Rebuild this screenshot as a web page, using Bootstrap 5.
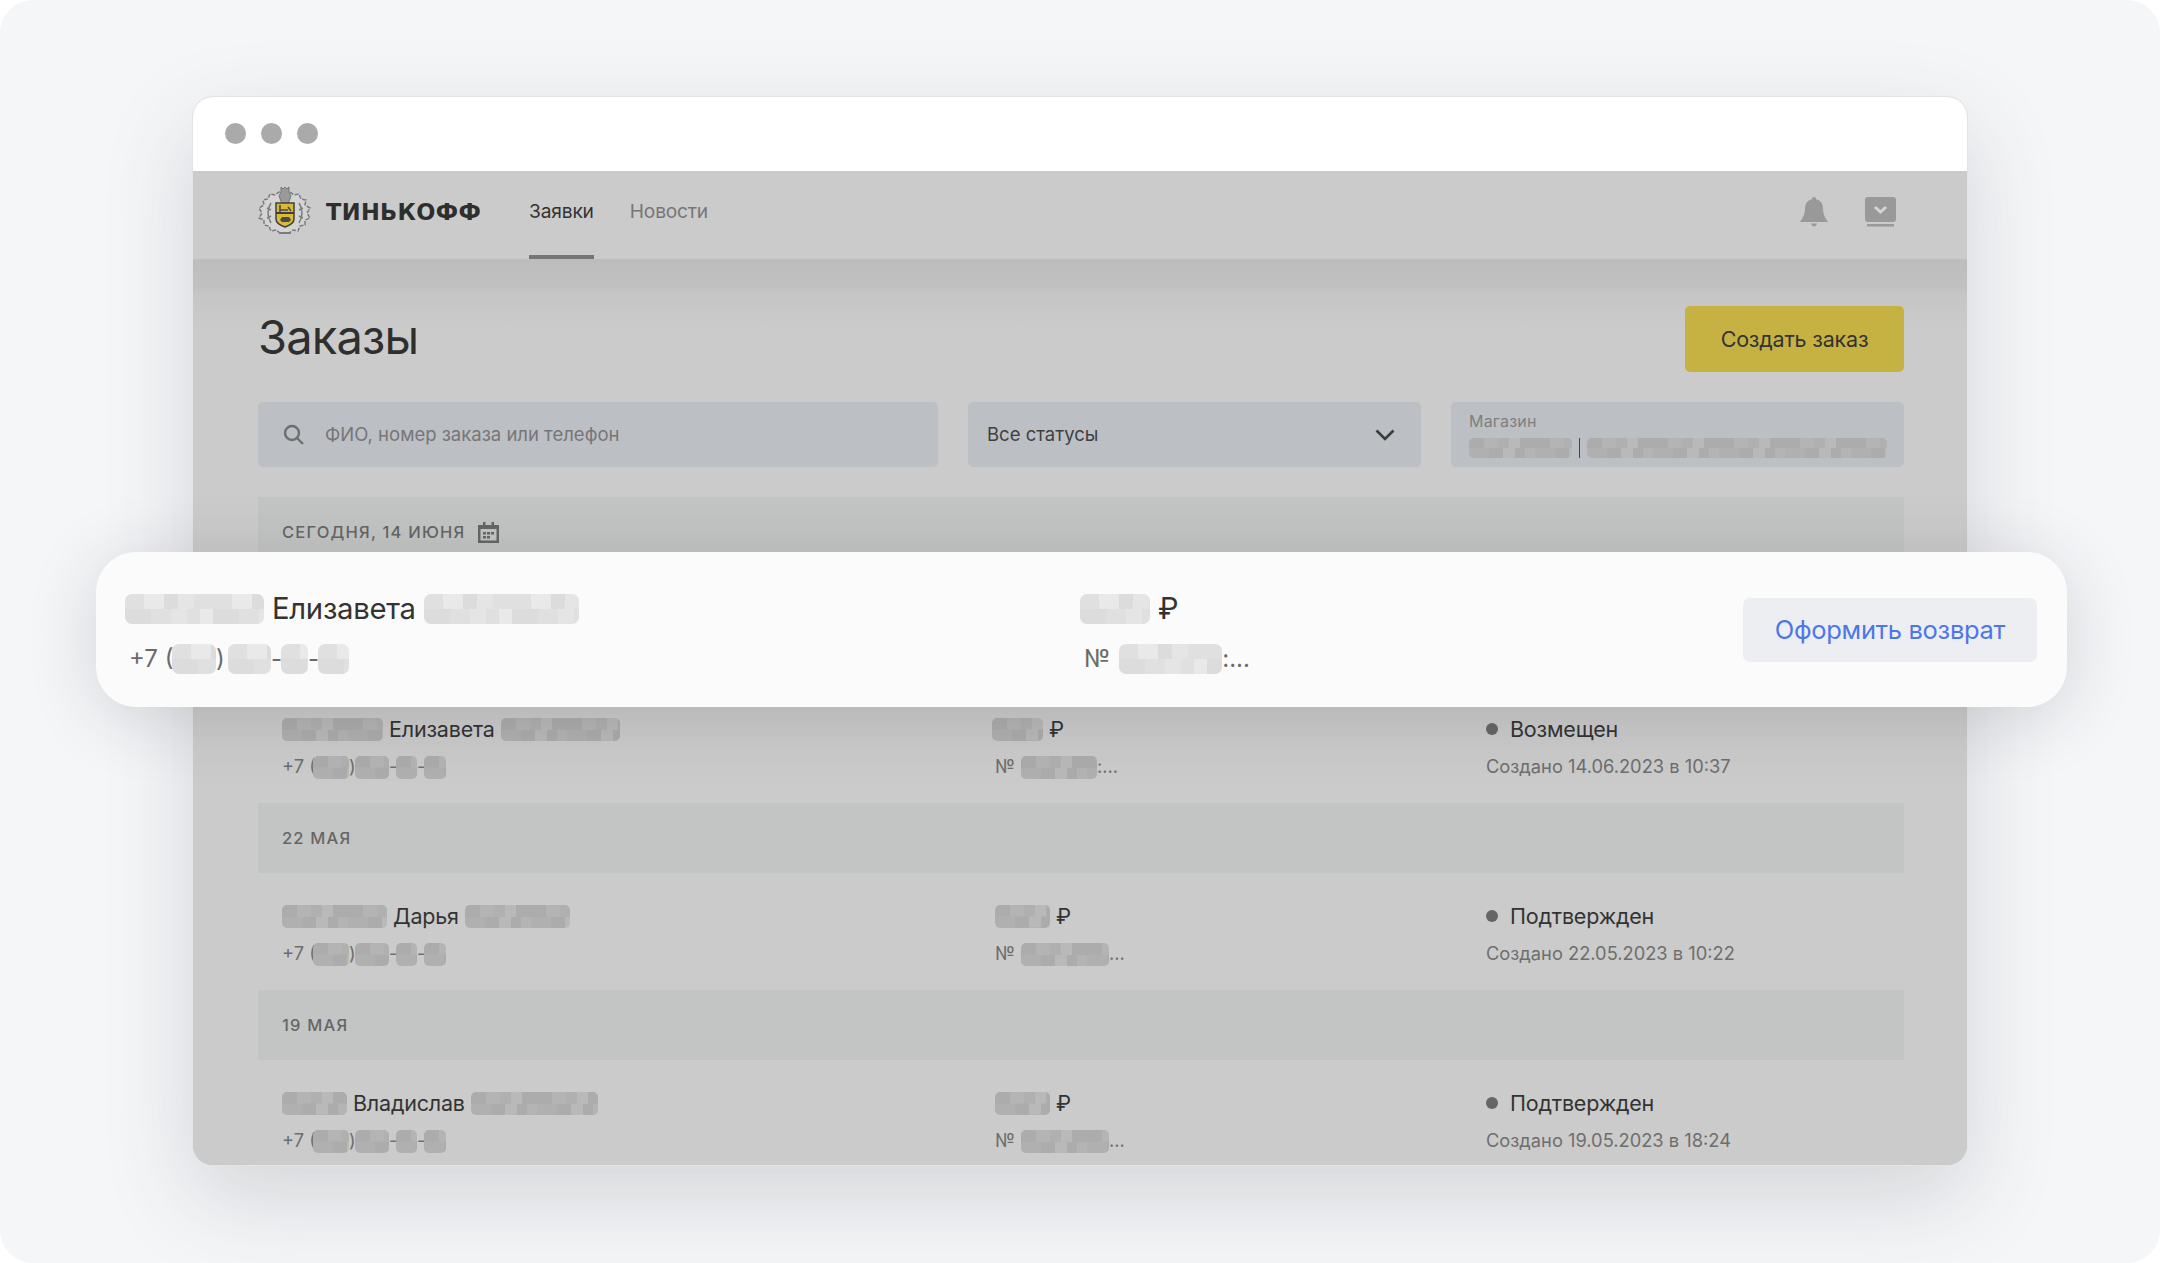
<!DOCTYPE html>
<html lang="ru">
<head>
<meta charset="utf-8">
<title>Заказы</title>
<link href="https://cdn.jsdelivr.net/npm/bootstrap@5.3.0/dist/css/bootstrap.min.css" rel="stylesheet">
<style>
html,body{margin:0;height:100%;background:#fff;overflow:hidden}
body{font-family:Inter,"Noto Sans",sans-serif;color:#333}
.stage{position:relative;width:2160px;height:1263px;background:#f5f6f8;border-radius:33px;padding:97px 193px 98px}
.win{width:1774px;height:1068px;border-radius:20px;overflow:hidden;background:#cbcbcb;box-shadow:0 0 0 1px #e2e3e5,0 32px 90px rgba(60,60,70,.18);display:flex;flex-direction:column}
.titlebar{height:74px;background:#fff;padding:0 0 2px 32px;gap:15px;flex:none}
.tl{width:21px;height:21px;border-radius:50%;background:#aaa}
.topnav{height:88px;flex:none;padding:0 71px 0 65px;background:#cbcbcb}
.logo-word{font-family:"DejaVu Sans",sans-serif;font-weight:700;font-size:22.5px;letter-spacing:.35px;color:#2e2e2e;margin-left:14px;line-height:1;margin-bottom:6px}
.tab{font-size:19.2px;height:88px;line-height:80px;color:#767676;margin-right:36px;border-bottom:4px solid transparent;letter-spacing:-.2px}
.tab.on{color:#333;border-bottom-color:#757575}
.tabs{margin-left:48px}
.iconset{gap:37px;margin-bottom:6px}
.content{flex:1;padding:0 63px 0 65px;background:linear-gradient(#bdbdbd 0,#c1c1c1 30px,#c4c5c4 34px,#cbcbcb 72px)}
.head-line{height:143px;padding-top:47px;align-items:flex-start}
.pagetitle{font-size:47px;line-height:62px;font-weight:400;color:#2f2f2f;margin:0;letter-spacing:-.8px}
.create{width:219px;height:66px;background:#c6b243;border:0;border-radius:5px;font-size:21.5px;color:#333;letter-spacing:-.2px;padding:0}
.filters{gap:30px;height:95px}
.fld{height:65px;background:#bcbfc4;border-radius:5px;font-size:18.5px}
.f-search{width:680px;padding-left:25px;color:#767676;gap:21px}
.f-select{width:453px;padding:0 26px 0 19px;color:#3f3f3f}
.f-store{width:453px;padding:10px 17px 0 18px}
.f-label{font-size:16px;line-height:19px;color:#7f7f7f;letter-spacing:.2px}
.store-line{margin-top:7px}
.bar-sep{width:2px;height:20px;background:#444;margin:0 7px}
.dbar{height:70px;background:#c3c5c4;padding-left:24px;font-size:16.5px;font-weight:500;letter-spacing:1.2px;color:#666;gap:13px}
.order{height:117px;padding:28px 0 0 24px;display:grid;grid-template-columns:713px 491px 1fr;grid-template-rows:30px 30px;row-gap:8px;align-items:center}
.order-gap{height:119px}
.nm{font-size:21.5px;color:#333;letter-spacing:-.2px;gap:6px}
.sub{font-size:18.3px;color:#6e6e6e}
.no-sign{margin-right:6px}
.plus{width:31px;white-space:nowrap;flex:none}
.dash{width:7px;text-align:center;flex:none}
.paren{width:6px;flex:none}
.st{font-size:21.5px;color:#333;gap:12px;letter-spacing:-.2px}
.dot{width:12px;height:12px;border-radius:50%;background:#666;flex:none}
.blk{--a:#acacac;--b:#b4b4b4;--c:#b0b0b0;--d:#b9b9b9;height:23px;border-radius:5px;flex:none;display:block;
background-color:var(--c);
background-image:linear-gradient(90deg,var(--a) 0 22%,var(--b) 22% 44%,var(--c) 44% 60%,var(--d) 60% 78%,var(--a) 78%),linear-gradient(90deg,var(--c) 0 30%,var(--a) 30% 52%,var(--d) 52% 70%,var(--a) 70% 85%,var(--b) 85%);
background-size:66px 50%;background-position:0 0,0 100%;background-repeat:repeat-x}
.f-store .blk{height:20px}
.pop{position:absolute;left:96px;top:552px;width:1971px;height:155px;border-radius:40px;background:#fbfbfb;box-shadow:0 10px 70px rgba(40,40,50,.16);padding:42px 30px 0 29px;display:grid;grid-template-columns:955px 663px 1fr;grid-template-rows:30px 30px;row-gap:20px;align-items:center}
.pop .blk{--a:#e0e0e0;--b:#e9e9e9;--c:#dcdcdc;--d:#e5e5e5;height:30px;border-radius:7px;background-size:88px 50%}
.pop .nm{font-size:29.3px;gap:8px;letter-spacing:-.3px}
.pop .sub{font-size:24px;padding-left:4px;color:#6a6a6a}
.pop .no-sign{margin-right:9px}
.pop .plus{width:43px}
.pop .paren{width:12px}
.pop .dash{width:10px}
.refund{grid-column:3;grid-row:1/3;justify-self:end;align-self:center;width:294px;height:64px;margin-bottom:8px;background:#eceef1;border:0;border-radius:7px;color:#4c76ea;font-size:25.5px;padding:0;letter-spacing:-.3px}
.w139{width:139px}.w155{width:155px}.w44{width:44px}.w43{width:43px}.w27{width:27px}.w31{width:31px}.w70{width:70px}.w103{width:103px}.w101{width:101px}.w119{width:119px}.w36{width:36px}.w34{width:34px}.w21{width:21px}.w22{width:22px}.w105{width:105px}.w65{width:65px}.w127{width:127px}.w55{width:55px}.w88{width:88px}.w76{width:76px}.w51{width:51px}.w300{width:300px}
.amt-first{margin-left:-3px}
</style>
</head>
<body>
<div class="stage">
  <div class="win">
    <div class="titlebar d-flex align-items-center"><span class="tl"></span><span class="tl"></span><span class="tl"></span></div>
    <div class="topnav d-flex align-items-center">
      <svg width="54" height="50" viewBox="0 0 54 50" fill="none" aria-hidden="true" class="mb-2">
        <path d="M27 8l5-2 4 3 5-1 2 5 5 1-1 5 5 3-3 5 3 5-5 2 0 5-5 1-2 5-5-1-4 3H22l-4-3-5 1-2-5-5-1 0-5-5-2 3-5-3-5 5-3-1-5 5-1 2-5 5 1 4-3z" fill="#d4d4d4" stroke="#7c7c7c" stroke-width="1.500" stroke-dasharray="4 1.500"/>
        <path d="M13 17c-4 6-4 14 0 20M41 17c4 6 4 14 0 20M9 22l4 2M9 32l4-2M45 22l-4 2M45 32l-4-2" stroke="#7c7c7c" stroke-width="1.500"/>
        <path d="M23 1l2 2 2-2 2 2 2-2v5l2 4-3 8h-6l-3-8 2-4z" fill="#9a9a9a" stroke="#666" stroke-width=".8"/>
        <path d="M18 17h18v16q0 5-9 8-9-3-9-8z" fill="#d8ba38" stroke="#3f3f3f" stroke-width="1.500"/>
        <path d="M18 27h18" stroke="#3f3f3f" stroke-width="1.800"/>
        <path d="M22 19v7M22 24h8M30 21l3 4" stroke="#4a4a4a" stroke-width="1.600"/>
        <path d="M22 34l2-3h7l2 3-2 2h-7z" fill="#4a4a4a"/>
        <path d="M21 47h12" stroke="#7c7c7c" stroke-width="2"/>
      </svg>
      <span class="logo-word">ТИНЬКОФФ</span>
      <nav class="tabs d-flex">
        <span class="tab on">Заявки</span>
        <span class="tab">Новости</span>
      </nav>
      <div class="iconset ms-auto d-flex align-items-center">
        <svg width="28" height="30" viewBox="0 0 28 30" aria-hidden="true" fill="#999"><path d="M14 0c1.300 0 2 .8 2 2.200 4.800 1 7 4.800 7 9.300 0 5.300 1.500 8.500 5 13.500H0c3.500-5 5-8.200 5-13.500 0-4.500 2.200-8.300 7-9.300C12 .8 12.700 0 14 0z"/><path d="M11 26.500h6c-.5 2-1.500 3-3 3s-2.500-1-3-3z"/></svg>
        <svg width="31" height="30" viewBox="0 0 31 30" aria-hidden="true"><rect x="0" y="0" width="31" height="25" rx="3" fill="#999"/><rect x="2" y="27" width="27" height="2.500" fill="#999"/><path d="M10 10l5.500 5 5.500-5" fill="none" stroke="#d4d4d4" stroke-width="3"/></svg>
      </div>
    </div>
    <div class="content">
      <div class="head-line d-flex justify-content-between">
        <h1 class="pagetitle">Заказы</h1>
        <button class="create" type="button">Создать заказ</button>
      </div>
      <div class="filters d-flex">
        <div class="fld f-search d-flex align-items-center">
          <svg width="21" height="21" viewBox="0 0 21 21" fill="none" stroke="#6f6f6f" stroke-width="2.400" aria-hidden="true"><circle cx="9" cy="9" r="7"/><path d="M14 14l6 6"/></svg>
          <span>ФИО, номер заказа или телефон</span>
        </div>
        <div class="fld f-select d-flex align-items-center justify-content-between">
          <span>Все статусы</span>
          <svg width="20" height="12" viewBox="0 0 20 12" fill="none" stroke="#3c3c3c" stroke-width="2.600" aria-hidden="true"><path d="M1.500 1.500l8.500 8.500 8.500-8.500"/></svg>
        </div>
        <div class="fld f-store">
          <div class="f-label">Магазин</div>
          <div class="store-line d-flex align-items-center"><span class="blk w103"></span><span class="bar-sep"></span><span class="blk w300"></span></div>
        </div>
      </div>
      <div class="dbar d-flex align-items-center">
        <span>СЕГОДНЯ, 14 ИЮНЯ</span>
        <svg width="21" height="21" viewBox="0 0 21 21" aria-hidden="true"><path d="M5 0h2.500v3h6V0H16v3h5v18H0V3h5z" fill="#666"/><rect x="2.500" y="7" width="16" height="11.500" fill="#c3c5c4"/><path d="M5 10h3v2.500H5zM9 10h3v2.500H9zM13 10h3v2.500h-3zM5 14h3v2.500H5zM9 14h3v2.500H9z" fill="#666"/></svg>
      </div>
      <div class="order-gap"></div>
      <div class="order">
        <div class="nm d-flex align-items-center"><span class="blk w101"></span><span>Елизавета</span><span class="blk w119"></span></div>
        <div class="nm d-flex align-items-center amt-first"><span class="blk w51"></span><span>₽</span></div>
        <div class="st d-flex align-items-center"><span class="dot"></span><span>Возмещен</span></div>
        <div class="sub d-flex align-items-center"><span class="plus">+7 (</span><span class="blk w36"></span><span class="paren">)</span><span class="blk w34"></span><span class="dash">-</span><span class="blk w21"></span><span class="dash">-</span><span class="blk w22"></span></div>
        <div class="sub d-flex align-items-center"><span class="no-sign">№</span><span class="blk w76"></span><span>:...</span></div>
        <div class="sub">Создано 14.06.2023 в 10:37</div>
      </div>
      <div class="dbar d-flex align-items-center"><span>22 МАЯ</span></div>
      <div class="order">
        <div class="nm d-flex align-items-center"><span class="blk w105"></span><span>Дарья</span><span class="blk w105"></span></div>
        <div class="nm d-flex align-items-center"><span class="blk w55"></span><span>₽</span></div>
        <div class="st d-flex align-items-center"><span class="dot"></span><span>Подтвержден</span></div>
        <div class="sub d-flex align-items-center"><span class="plus">+7 (</span><span class="blk w36"></span><span class="paren">)</span><span class="blk w34"></span><span class="dash">-</span><span class="blk w21"></span><span class="dash">-</span><span class="blk w22"></span></div>
        <div class="sub d-flex align-items-center"><span class="no-sign">№</span><span class="blk w88"></span><span>...</span></div>
        <div class="sub">Создано 22.05.2023 в 10:22</div>
      </div>
      <div class="dbar d-flex align-items-center"><span>19 МАЯ</span></div>
      <div class="order">
        <div class="nm d-flex align-items-center"><span class="blk w65"></span><span>Владислав</span><span class="blk w127"></span></div>
        <div class="nm d-flex align-items-center"><span class="blk w55"></span><span>₽</span></div>
        <div class="st d-flex align-items-center"><span class="dot"></span><span>Подтвержден</span></div>
        <div class="sub d-flex align-items-center"><span class="plus">+7 (</span><span class="blk w36"></span><span class="paren">)</span><span class="blk w34"></span><span class="dash">-</span><span class="blk w21"></span><span class="dash">-</span><span class="blk w22"></span></div>
        <div class="sub d-flex align-items-center"><span class="no-sign">№</span><span class="blk w88"></span><span>...</span></div>
        <div class="sub">Создано 19.05.2023 в 18:24</div>
      </div>
    </div>
  </div>
  <div class="pop">
    <div class="nm d-flex align-items-center"><span class="blk w139"></span><span>Елизавета</span><span class="blk w155"></span></div>
    <div class="nm d-flex align-items-center"><span class="blk w70"></span><span>₽</span></div>
    <button class="refund" type="button">Оформить возврат</button>
    <div class="sub d-flex align-items-center"><span class="plus">+7 (</span><span class="blk w44"></span><span class="paren">)</span><span class="blk w43"></span><span class="dash">-</span><span class="blk w27"></span><span class="dash">-</span><span class="blk w31"></span></div>
    <div class="sub d-flex align-items-center"><span class="no-sign">№</span><span class="blk w103"></span><span>:...</span></div>
  </div>
</div>
<script src="https://cdn.jsdelivr.net/npm/bootstrap@5.3.0/dist/js/bootstrap.bundle.min.js"></script>
</body>
</html>
